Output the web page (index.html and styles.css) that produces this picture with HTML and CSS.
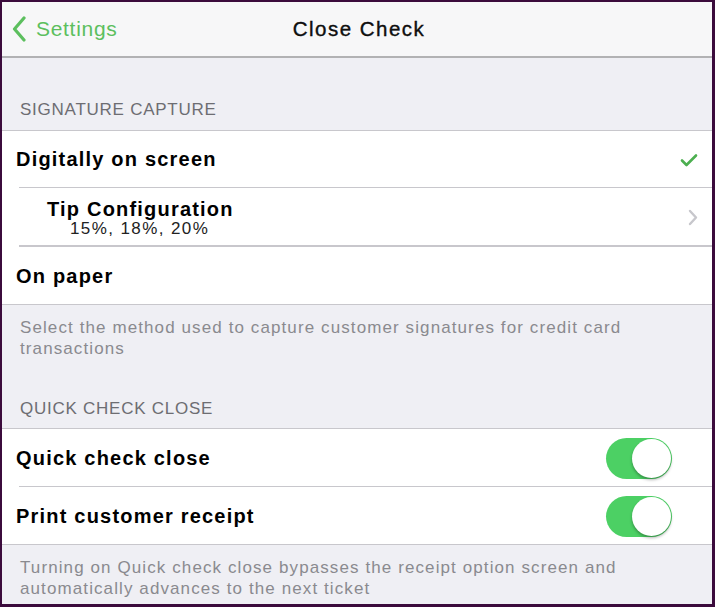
FILE: index.html
```html
<!DOCTYPE html>
<html>
<head>
<meta charset="utf-8">
<link rel="stylesheet" href="styles.css">
</head>
<body>
<div class="frame">
  <div class="screen">
    <header class="nav">
      <div class="back">
        <svg class="back-icon" width="14" height="26" viewBox="0 0 14 26"><path d="M12 2 L2.5 13 L12 24" fill="none" stroke="#5cbf5e" stroke-width="3.2" stroke-linecap="round" stroke-linejoin="round"/></svg>
        <span>Settings</span>
      </div>
      <div class="title">Close Check</div>
    </header>

    <div class="section-header first">SIGNATURE CAPTURE</div>
    <div class="group">
      <div class="row first">
        <span class="label">Digitally on screen</span>
        <svg class="check" width="18" height="14" viewBox="0 0 18 14"><path d="M2 7.5 L6.5 12 L16 2.5" fill="none" stroke="#4caf50" stroke-width="2.6" stroke-linecap="round" stroke-linejoin="round"/></svg>
      </div>
      <div class="row sub">
        <div class="sub-text">
          <span class="label">Tip Configuration</span>
          <span class="detail">15%, 18%, 20%</span>
        </div>
        <svg class="chev" width="10" height="17" viewBox="0 0 10 17"><path d="M2 2 L8 8.5 L2 15" fill="none" stroke="#c7c7cc" stroke-width="2.4" stroke-linecap="round" stroke-linejoin="round"/></svg>
      </div>
      <div class="row last">
        <span class="label">On paper</span>
      </div>
    </div>
    <div class="footer">Select the method used to capture customer signatures for credit card transactions</div>

    <div class="section-header second">QUICK CHECK CLOSE</div>
    <div class="group">
      <div class="row">
        <span class="label">Quick check close</span>
        <span class="toggle"><span class="knob"></span></span>
      </div>
      <div class="row last">
        <span class="label">Print customer receipt</span>
        <span class="toggle"><span class="knob"></span></span>
      </div>
    </div>
    <div class="footer">Turning on Quick check close bypasses the receipt option screen and automatically advances to the next ticket</div>
  </div>
</div>
</body>
</html>
```
FILE: styles.css
```css
html, body {
  margin: 0;
  padding: 0;
  background: #3b0b3c;
}
.frame {
  width: 715px;
  height: 607px;
  box-sizing: border-box;
  padding: 2px 3px 3px 2px;
}
.screen {
  height: 100%;
  background: #efeff4;
  font-family: "Liberation Sans", Arial, sans-serif;
  color: #000;
  overflow: hidden;
}
.nav {
  height: 54px;
  background: #f7f7f8;
  border-bottom: 2px solid #b2b2b4;
  display: flex;
  align-items: center;
  position: relative;
}
.back {
  display: flex;
  align-items: center;
  padding-left: 10px;
  color: #5cbf5e;
  font-size: 21px;
  letter-spacing: 0.7px;
  gap: 10px;
}
.title {
  position: absolute;
  left: 0;
  right: 0;
  text-align: center;
  font-size: 20.5px;
  letter-spacing: 1.5px;
  -webkit-text-stroke: 0.35px #000;
  color: #111;
  pointer-events: none;
  padding-left: 4px;
}
.section-header {
  height: 73px;
  box-sizing: border-box;
  display: flex;
  align-items: flex-end;
  padding: 0 0 10px 18px;
  font-size: 17px;
  letter-spacing: 0.75px;
  color: #6d6d72;
  border-bottom: 1px solid #c8c7cc;
}
.section-header.second {
  height: 70px;
  padding-bottom: 9px;
}
.group {
  background: #fff;
}
.row {
  height: 58px;
  box-sizing: border-box;
  display: flex;
  align-items: center;
  justify-content: space-between;
  padding: 0 40px 0 14px;
  position: relative;
}
.row.first {
  height: 57px;
}
.row.sub {
  height: 59px;
}
.row::after {
  content: "";
  position: absolute;
  left: 17px;
  right: 0;
  bottom: 0;
  height: 1px;
  background: #c8c7cc;
}
.row.last::after {
  left: 0;
}
.row.sub::after {
  height: 2px;
}
.label {
  font-size: 20px;
  font-weight: bold;
  letter-spacing: 1.2px;
}
.check {
  margin-right: -26px;
}
.chev {
  margin-right: -26px;
}
.sub-text {
  display: flex;
  flex-direction: column;
  padding-left: 31px;
}
.detail {
  font-size: 17px;
  padding-left: 23px;
  line-height: 18px;
  letter-spacing: 1.4px;
  color: #222;
}
.sub-text .label {
  line-height: 22px;
}
.footer {
  padding: 12px 18px 0 18px;
  font-size: 17px;
  line-height: 21px;
  letter-spacing: 1.1px;
  color: #8a8a8f;
}
.toggle {
  width: 66px;
  height: 41px;
  border-radius: 21px;
  background: #4cd064;
  position: relative;
}
.knob {
  position: absolute;
  right: 1px;
  top: 1px;
  width: 39px;
  height: 39px;
  border-radius: 50%;
  background: #fff;
  box-shadow: 0 2px 3px rgba(0,0,0,0.3);
}
```
